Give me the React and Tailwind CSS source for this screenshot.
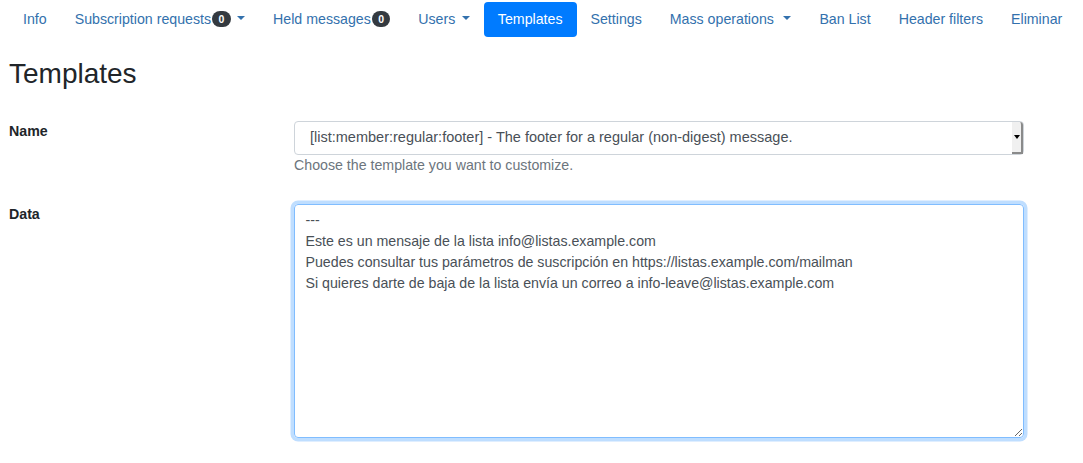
import React from "react";

const Caret = ({ wide }) => (
    <span
        className={
            (wide ? "ml-[9.5px] " : "ml-[6.5px] ") +
            "inline-block w-0 h-0 align-[0.255em] border-x-[4.2px] border-x-transparent border-t-[4.2px] border-t-current"
        }
    />
);

const Badge = ({ children }) => (
    <span className="inline-block ml-[1px] px-[6.3px] py-[2.6px] rounded-full bg-[#343a40] text-white text-[10.5px] font-bold leading-none align-[1px]">
        {children}
    </span>
);

const NavLink = ({ active, children }) => (
    <a
        href="#"
        className={
            active
                ? "block px-[14px] py-[7px] rounded-[4px] bg-[#007bff] text-white whitespace-nowrap"
                : "block px-[14px] py-[7px] text-[#3371ad] whitespace-nowrap"
        }
    >
        {children}
    </a>
);

const lines = [
    "---",
    "Este es un mensaje de la lista info@listas.example.com",
    "Puedes consultar tus parámetros de suscripción en https://listas.example.com/mailman",
    "Si quieres darte de baja de la lista envía un correo a info-leave@listas.example.com",
];

export default function App() {
    return (
        <div className="min-h-screen bg-white px-[9px] font-['Liberation_Sans',Arial,sans-serif] text-[14.2px] leading-[21px] text-[#212529] overflow-hidden">
            <nav className="flex pt-[2px]">
                <NavLink>Info</NavLink>
                <NavLink>
                    Subscription requests<Badge>0</Badge>
                    <Caret />
                </NavLink>
                <NavLink>
                    Held messages<Badge>0</Badge>
                </NavLink>
                <NavLink>
                    Users
                    <Caret />
                </NavLink>
                <NavLink active>Templates</NavLink>
                <NavLink>Settings</NavLink>
                <NavLink>
                    Mass operations
                    <Caret wide />
                </NavLink>
                <NavLink>Ban List</NavLink>
                <NavLink>Header filters</NavLink>
                <NavLink>Eliminar</NavLink>
            </nav>

            <h2 className="mt-[20px] text-[28px] leading-[1.2] font-normal">Templates</h2>

            <form className="mt-[30px]">
                <div className="flex">
                    <label className="w-[285px] shrink-0 font-bold">Name</label>
                    <div className="w-[730px]">
                        <div className="flex h-[34px] border border-[#ced4da] rounded-[4px] bg-white text-[#495057]">
                            <div className="flex-1 flex items-center pl-[15px] text-[14.5px] whitespace-nowrap">
                                [list:member:regular:footer] - The footer for a regular (non-digest) message.
                            </div>
                            <div className="w-[11px] flex items-center justify-center bg-[#f0f0f0] border-r-2 border-b-2 border-[#8a8a8a] rounded-tr-[3px]">
                                <span className="block w-0 h-0 border-x-[3px] border-x-transparent border-t-[4px] border-t-black" />
                            </div>
                        </div>
                        <p className="mt-0 text-[#6c757d]">Choose the template you want to customize.</p>
                    </div>
                </div>

                <div className="flex mt-[28px]">
                    <label className="w-[285px] shrink-0 font-bold">Data</label>
                    <textarea
                        readOnly
                        value={lines.join("\n")}
                        className="block w-[730px] h-[234px] px-[10.5px] py-[5.25px] border border-[#80bdff] rounded-[4px] text-[#495057] leading-[21px] outline-none shadow-[0_0_0_3.5px_rgba(0,123,255,0.25)] resize-y"
                    />
                </div>
            </form>
        </div>
    );
}
